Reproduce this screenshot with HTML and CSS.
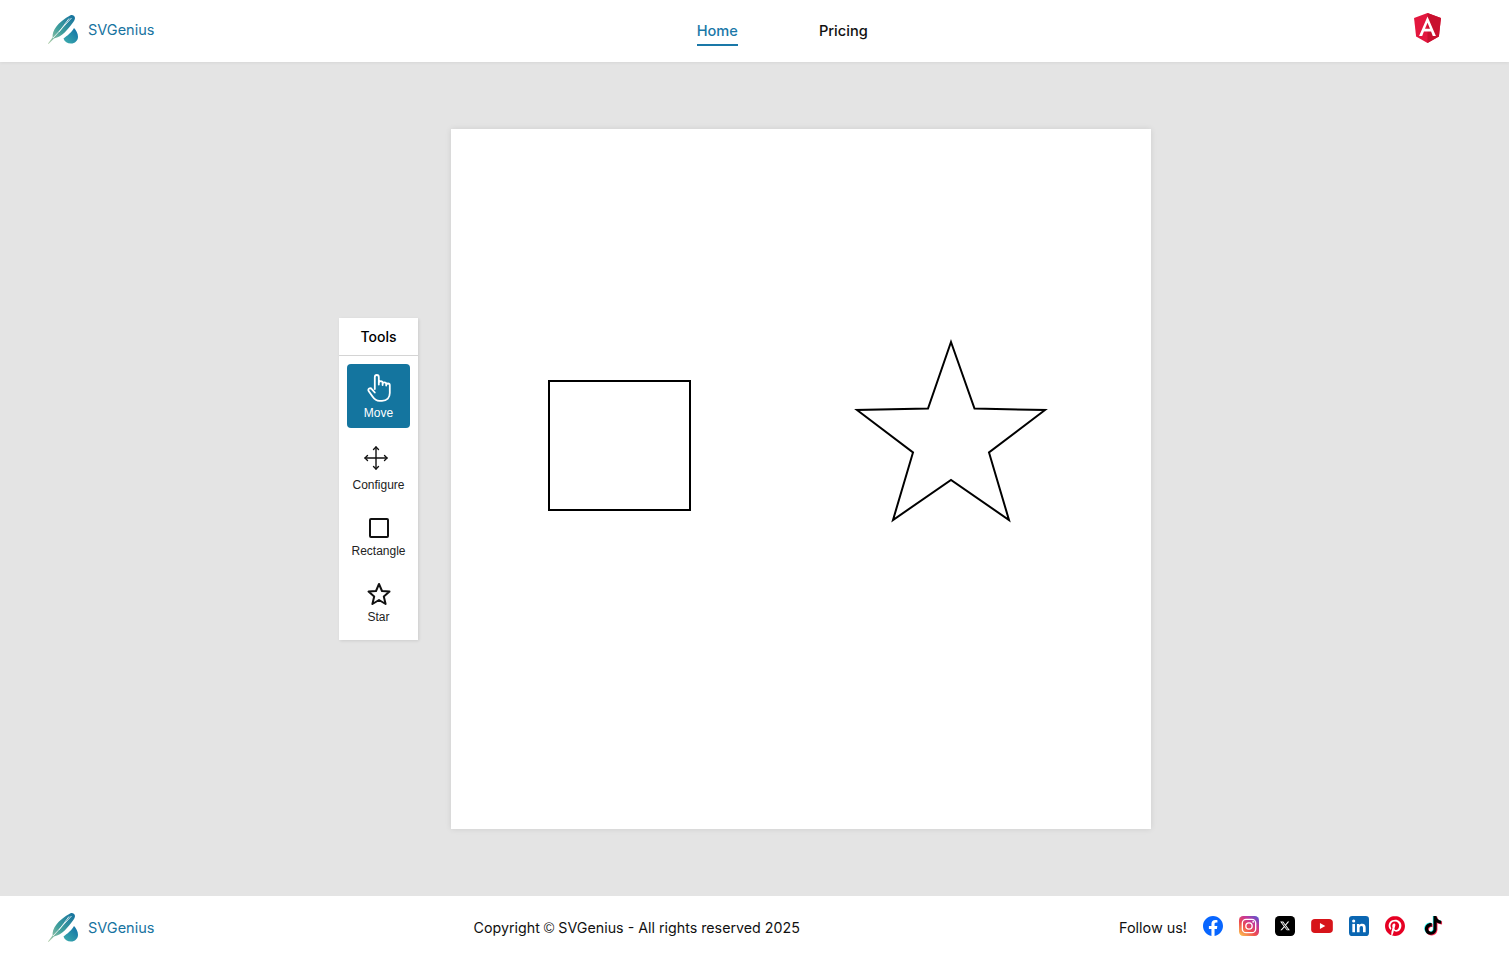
FILE: index.html
```html
<!DOCTYPE html>
<html lang="en">
<head>
    <meta charset="UTF-8">
    <meta name="viewport" content="width=device-width, initial-scale=1.0">
    <title>SVGenius</title>
    <link rel="stylesheet" href="styles.css">
</head>
<body>

    <header class="topbar">
        <a class="brand" href="#">
            <svg class="brand-logo" viewBox="0 0 32 30">
                <defs>
                    <linearGradient id="featherGrad" x1="0" y1="1" x2="1" y2="0">
                        <stop offset="0" stop-color="#b5cfa8"/>
                        <stop offset="0.45" stop-color="#3f9f9c"/>
                        <stop offset="1" stop-color="#14709f"/>
                    </linearGradient>
                    <linearGradient id="dropGrad" x1="0" y1="1" x2="1" y2="0">
                        <stop offset="0" stop-color="#3fb0ad"/>
                        <stop offset="1" stop-color="#0f6ea6"/>
                    </linearGradient>
                </defs>
                <path d="M1 29.600 5.600 23.400C5 17 10 8.500 23.500 1.200 25.500.4 27.600 1.600 27.900 3.600 28.200 5 27.500 6.400 26.500 7.800 20.500 16 15.500 22.500 7 24.500L1.500 30Z" fill="url(#featherGrad)"/>
                <path d="M6 24 24.500 4M12 18 22 4.500" stroke="#fff" stroke-width="0.8" fill="none"/>
                <path d="M27 14C25 18 20 22 16.500 24.500 17.500 27.800 20.500 29.600 24 29.600 28 29.600 31 26.600 31 22.800 31 19.500 29 16 27 14Z" fill="url(#dropGrad)"/>
            </svg>
            <span>SVGenius</span>
        </a>
        <nav class="main-nav">
            <a class="nav-link active" href="#">Home</a>
            <a class="nav-link" href="#">Pricing</a>
        </nav>
        <svg class="angular-logo" viewBox="0 0 24 24" preserveAspectRatio="none">
            <path fill="#e3173e" d="M12 .008 .86 3.980 2.560 18.704 12 24l9.440-5.296 1.700-14.724z"/>
            <path fill="#c8102e" d="M12 .008V24l9.440-5.296 1.700-14.724z"/>
            <path fill="#fff" d="M12 2.725 5.036 18.325H7.630L9.030 14.835H14.968L16.368 18.325H18.963ZM14.069 12.645H9.931L12 7.737Z"/>
        </svg>
    </header>

    <main class="workspace">
        <aside class="toolbar">
            <div class="toolbar-title">Tools</div>
            <div class="tool-list">
                <button class="tool active">
                    <svg class="tool-icon" viewBox="0 0 24 28" fill="none" stroke="#fff" stroke-width="1.800" stroke-linejoin="round" stroke-linecap="round">
                        <path d="M7.800 15V3.200C7.800 1.900 8.700 1 9.800 1S11.800 1.900 11.800 3.200V10.500M11.800 9C11.800 7.900 12.800 7.200 13.800 7.200S15.600 7.900 15.600 9V11M15.600 10C15.600 9 16.500 8.300 17.400 8.300S19.200 9 19.200 10V11.500M19.200 11C19.200 10 20.200 9.500 21 9.500S22.800 10.200 22.800 11.300V19C22.800 23.500 20 26.800 15 26.800H12.500C9 26.800 7.200 25 5.500 22.500L1.800 17.200C1 16 1.300 15 2.200 14.500 3.200 14 4.200 14.300 5 15.300L7.800 18.500"/>
                    </svg>
                    <span>Move</span>
                </button>
                <button class="tool tool-configure">
                    <svg class="tool-icon move-icon" viewBox="0 0 24 24" fill="none" stroke="#111" stroke-width="1.400" stroke-linejoin="round" stroke-linecap="round">
                        <path d="M12 1V23M1 12H23"/>
                        <path d="M9.500 3.500 12 1 14.500 3.500M9.500 20.500 12 23 14.500 20.500M3.500 9.500 1 12 3.500 14.500M20.500 9.500 23 12 20.500 14.500"/>
                    </svg>
                    <span>Configure</span>
                </button>
                <button class="tool">
                    <svg class="tool-icon" viewBox="0 0 24 24" fill="none" stroke="#111" stroke-width="2">
                        <rect x="3" y="3" width="18" height="18" rx="1"/>
                    </svg>
                    <span>Rectangle</span>
                </button>
                <button class="tool">
                    <svg class="tool-icon" viewBox="0 0 24 24" fill="none" stroke="#111" stroke-width="2" stroke-linejoin="round">
                        <path d="M12 2 15 9 22.500 9.600 16.800 14.400 18.600 22 12 18 5.400 22 7.200 14.400 1.500 9.600 9 9Z"/>
                    </svg>
                    <span>Star</span>
                </button>
            </div>
        </aside>

        <section class="canvas">
            <svg class="drawing" viewBox="0 0 700 700">
                <rect x="98" y="252" width="141" height="129" fill="#fff" stroke="#000" stroke-width="2"/>
                <polygon points="500,213 523.500,279.500 594,281 538,323.500 558,391 500,351 442,391 462,323.500 406,281 477,279.500" fill="#fff" stroke="#000" stroke-width="2"/>
            </svg>
        </section>
    </main>

    <footer class="bottombar">
        <a class="brand" href="#">
            <svg class="brand-logo" viewBox="0 0 32 30">
                <path d="M1 29.600 5.600 23.400C5 17 10 8.500 23.500 1.200 25.500.4 27.600 1.600 27.900 3.600 28.200 5 27.500 6.400 26.500 7.800 20.500 16 15.500 22.500 7 24.500L1.500 30Z" fill="url(#featherGrad)"/>
                <path d="M6 24 24.500 4M12 18 22 4.500" stroke="#fff" stroke-width="0.8" fill="none"/>
                <path d="M27 14C25 18 20 22 16.500 24.500 17.500 27.800 20.500 29.600 24 29.600 28 29.600 31 26.600 31 22.800 31 19.500 29 16 27 14Z" fill="url(#dropGrad)"/>
            </svg>
            <span>SVGenius</span>
        </a>
        <p class="copyright">Copyright <span class="copy-mark">©</span> SVGenius - All rights reserved 2025</p>
        <div class="social">
            <span class="follow">Follow us!</span>
            <svg class="social-icon" viewBox="0 0 24 24">
                <path fill="#0866ff" d="M24 12.073c0-6.627-5.373-12-12-12s-12 5.373-12 12c0 5.990 4.388 10.954 10.125 11.854v-8.385H7.078v-3.470h3.047V9.430c0-3.007 1.792-4.669 4.533-4.669 1.312 0 2.686.235 2.686.235v2.953H15.830c-1.491 0-1.956.925-1.956 1.874v2.250h3.328l-.532 3.470h-2.796v8.385C19.612 23.027 24 18.062 24 12.073z"/>
            </svg>
            <svg class="social-icon" viewBox="0 0 24 24">
                <defs>
                    <linearGradient id="igGrad" x1="0.1" y1="1" x2="0.9" y2="0">
                        <stop offset="0" stop-color="#fdc04f"/>
                        <stop offset="0.4" stop-color="#ee4a4f"/>
                        <stop offset="0.7" stop-color="#c4379a"/>
                        <stop offset="1" stop-color="#5b55d0"/>
                    </linearGradient>
                </defs>
                <rect width="24" height="24" rx="5" fill="url(#igGrad)"/>
                <rect x="4" y="4" width="16" height="16" rx="4.500" fill="none" stroke="#fff" stroke-width="1.600"/>
                <circle cx="12" cy="12" r="3.800" fill="none" stroke="#fff" stroke-width="1.600"/>
                <circle cx="17" cy="7" r="1.100" fill="#fff"/>
            </svg>
            <svg class="social-icon" viewBox="0 0 24 24">
                <rect width="24" height="24" rx="5" fill="#000"/>
                <path fill="#fff" transform="translate(5.500 5.500) scale(.54)" d="M18.244 2.250h3.308l-7.227 8.260 8.502 11.240H16.170l-5.214-6.817L4.990 21.750H1.680l7.730-8.835L1.254 2.250H8.080l4.713 6.231zm-1.161 17.520h1.833L7.084 4.126H5.117z"/>
            </svg>
            <svg class="social-icon wide" viewBox="0 0 26 24">
                <rect y="3.500" width="26" height="17" rx="4.500" fill="#d7141a"/>
                <path fill="#fff" d="M10.500 8.500 17 12 10.500 15.500Z"/>
            </svg>
            <svg class="social-icon" viewBox="0 0 24 24">
                <rect width="24" height="24" rx="4" fill="#0a66b2"/>
                <rect x="4" y="9.500" width="3.200" height="10" fill="#fff"/>
                <circle cx="5.600" cy="6" r="1.900" fill="#fff"/>
                <path fill="#fff" d="M9.500 9.500h3v1.400C13.200 9.800 14.400 9.200 15.800 9.200 18.800 9.200 20 11 20 14v5.500h-3.200v-5c0-1.500-.5-2.500-1.800-2.500-1.400 0-2.300 1-2.300 2.600v4.900H9.500z"/>
            </svg>
            <svg class="social-icon" viewBox="0 0 24 24">
                <path fill="#e60023" d="M12.017 0C5.396 0 .029 5.367.029 11.987c0 5.079 3.158 9.417 7.618 11.162-.105-.949-.199-2.403.041-3.439.219-.937 1.406-5.957 1.406-5.957s-.359-.720-.359-1.781c0-1.663.967-2.911 2.168-2.911 1.024 0 1.518.769 1.518 1.688 0 1.029-.653 2.567-.992 3.992-.285 1.193.600 2.165 1.775 2.165 2.128 0 3.768-2.245 3.768-5.487 0-2.861-2.063-4.869-5.008-4.869-3.410 0-5.409 2.562-5.409 5.199 0 1.033.394 2.143.889 2.741.099.120.112.225.085.345-.090.375-.293 1.199-.334 1.363-.053.225-.172.271-.401.165-1.495-.690-2.433-2.878-2.433-4.646 0-3.776 2.748-7.252 7.920-7.252 4.158 0 7.392 2.967 7.392 6.923 0 4.135-2.607 7.462-6.233 7.462-1.214 0-2.354-.629-2.758-1.379l-.749 2.848c-.269 1.045-1.004 2.352-1.498 3.146 1.123.345 2.306.535 3.550.535 6.607 0 11.985-5.365 11.985-11.987C23.970 5.390 18.592.026 11.985.026L12.017 0z"/>
            </svg>
            <svg class="social-icon wide" viewBox="-3 0 26 24">
                <path fill="#25f4ee" transform="translate(-.8 -.5) scale(.94)" d="M12.525.020c1.310-.020 2.610-.010 3.910-.020.080 1.530.630 3.090 1.750 4.170 1.120 1.110 2.700 1.620 4.240 1.790v4.030c-1.440-.050-2.890-.350-4.200-.97-.570-.260-1.100-.590-1.620-.93-.010 2.920.010 5.840-.020 8.750-.080 1.400-.540 2.790-1.350 3.940-1.310 1.920-3.580 3.170-5.910 3.210-1.430.080-2.860-.310-4.080-1.030-2.020-1.190-3.440-3.370-3.650-5.710-.020-.500-.030-1-.010-1.490.180-1.900 1.120-3.720 2.580-4.960 1.660-1.440 3.980-2.130 6.150-1.720.020 1.480-.040 2.960-.040 4.440-.990-.320-2.150-.230-3.020.370-.630.410-1.110 1.040-1.360 1.750-.210.510-.150 1.070-.140 1.610.240 1.640 1.820 3.020 3.500 2.870 1.120-.010 2.190-.660 2.770-1.610.190-.330.400-.670.410-1.060.100-1.790.060-3.570.070-5.360.010-4.030-.010-8.050.020-12.070z"/>
                <path fill="#fe2c55" transform="translate(1 .8) scale(.94)" d="M12.525.020c1.310-.020 2.610-.010 3.910-.020.080 1.530.630 3.090 1.750 4.170 1.120 1.110 2.700 1.620 4.240 1.790v4.030c-1.440-.050-2.890-.350-4.200-.97-.570-.260-1.100-.590-1.620-.93-.010 2.920.010 5.840-.020 8.750-.080 1.400-.540 2.790-1.350 3.940-1.310 1.920-3.580 3.170-5.910 3.210-1.430.080-2.860-.310-4.080-1.030-2.020-1.190-3.440-3.370-3.650-5.710-.020-.500-.030-1-.010-1.490.180-1.900 1.120-3.720 2.580-4.960 1.660-1.440 3.980-2.130 6.150-1.720.020 1.480-.040 2.960-.040 4.440-.990-.320-2.150-.230-3.020.370-.630.410-1.110 1.040-1.360 1.750-.210.510-.150 1.070-.140 1.610.240 1.640 1.820 3.020 3.500 2.870 1.120-.010 2.190-.660 2.770-1.610.190-.330.400-.670.410-1.060.100-1.790.060-3.570.070-5.360.010-4.030-.010-8.050.020-12.070z"/>
                <path fill="#000" transform="scale(.94)" d="M12.525.020c1.310-.020 2.610-.010 3.910-.020.080 1.530.630 3.090 1.750 4.170 1.120 1.110 2.700 1.620 4.240 1.790v4.030c-1.440-.050-2.890-.350-4.200-.97-.570-.260-1.100-.590-1.620-.93-.010 2.920.010 5.840-.020 8.750-.080 1.400-.540 2.790-1.350 3.940-1.310 1.920-3.580 3.170-5.910 3.210-1.430.080-2.860-.310-4.080-1.030-2.020-1.190-3.440-3.370-3.650-5.710-.020-.500-.030-1-.010-1.490.180-1.900 1.120-3.720 2.580-4.960 1.660-1.440 3.980-2.130 6.150-1.720.020 1.480-.040 2.960-.040 4.440-.990-.320-2.150-.230-3.020.370-.630.410-1.110 1.040-1.360 1.750-.210.510-.150 1.070-.140 1.610.240 1.640 1.820 3.020 3.500 2.870 1.120-.010 2.190-.660 2.770-1.610.190-.330.400-.670.410-1.060.100-1.790.060-3.570.070-5.360.010-4.030-.010-8.050.020-12.070z"/>
            </svg>
        </div>
    </footer>

</body>
</html>
```

FILE: styles.css
```css
/* Global reset */
* {
    margin: 0;
    padding: 0;
    box-sizing: border-box;
}

body {
    font-family: 'Inter', sans-serif;
    height: 953px;
    display: flex;
    flex-direction: column;
    background-color: #e4e4e4;
    overflow: hidden;
}

a {
    text-decoration: none;
}

/* Header */
.topbar {
    height: 62px;
    flex-shrink: 0;
    display: flex;
    justify-content: space-between;
    align-items: center;
    padding: 0 67px 0 47px;
    background-color: #fff;
    box-shadow: 0 1px 3px rgba(0, 0, 0, 0.06);
}

.brand {
    display: flex;
    align-items: center;
    gap: 9px;
    color: #17739f;
    font-size: 14.5px;
    font-weight: 400;
}

.brand-logo {
    width: 32px;
    height: 30px;
}

.topbar .brand {
    margin-top: -4px;
}

.main-nav {
    display: flex;
    gap: 81px;
    margin-right: 3px;
}

.nav-link {
    padding: 6px 0 4px;
    font-size: 14.6px;
    font-weight: 500;
    color: #111;
    border-bottom: 2px solid transparent;
}

.nav-link.active {
    color: #1a78a8;
    border-bottom-color: #1a78a8;
}

.angular-logo {
    width: 29px;
    height: 30px;
    margin-top: -6px;
}

/* Workspace */
.workspace {
    flex: 1;
    display: flex;
    align-items: center;
    gap: 33px;
    padding-left: 339px;
}

.toolbar {
    width: 79px;
    background-color: #fff;
    box-shadow: 1px 1px 3px rgba(0, 0, 0, 0.1);
}

.toolbar-title {
    height: 38px;
    line-height: 37px;
    text-align: center;
    font-size: 14px;
    font-weight: 500;
    color: #000;
    border-bottom: 1px solid #d4d4d4;
}

.tool-list {
    display: flex;
    flex-direction: column;
    padding: 8px 8px 0;
}

.tool {
    height: 66px;
    display: flex;
    flex-direction: column;
    align-items: center;
    gap: 4px;
    padding-top: 8px;
    border: none;
    border-radius: 4px;
    background: none;
    font-family: 'Liberation Sans', Arial, sans-serif;
    font-size: 12px;
    color: #222;
}

.tool.active {
    height: 64px;
    padding-top: 10px;
    margin-bottom: 10px;
    background-color: #14759f;
    color: #fff;
}

.tool-configure {
    height: 70px;
    gap: 8px;
}

.tool-icon {
    width: 24px;
    height: 24px;
    flex-shrink: 0;
}

.tool.active .tool-icon {
    height: 28px;
}

.move-icon {
    margin-left: -5px;
}

.canvas {
    width: 700px;
    height: 700px;
    background-color: #fff;
    box-shadow: 0 0 6px rgba(0, 0, 0, 0.1);
}

.drawing {
    display: block;
    width: 100%;
    height: 100%;
}

/* Footer */
.bottombar {
    height: 57px;
    flex-shrink: 0;
    display: flex;
    justify-content: space-between;
    align-items: center;
    padding: 6px 66px 0 47px;
    background-color: #fff;
}

.bottombar .brand {
    margin-top: -1px;
}

.copyright {
    font-size: 14.25px;
    color: #111;
}

.copy-mark {
    font-family: 'Liberation Sans', sans-serif;
    font-weight: 400;
}

.social {
    display: flex;
    align-items: center;
    gap: 16px;
}

.follow {
    font-size: 14.4px;
    color: #111;
}

.social-icon {
    width: 20px;
    height: 20px;
    margin-top: -3px;
}

.social-icon.wide {
    width: 22px;
}
```
